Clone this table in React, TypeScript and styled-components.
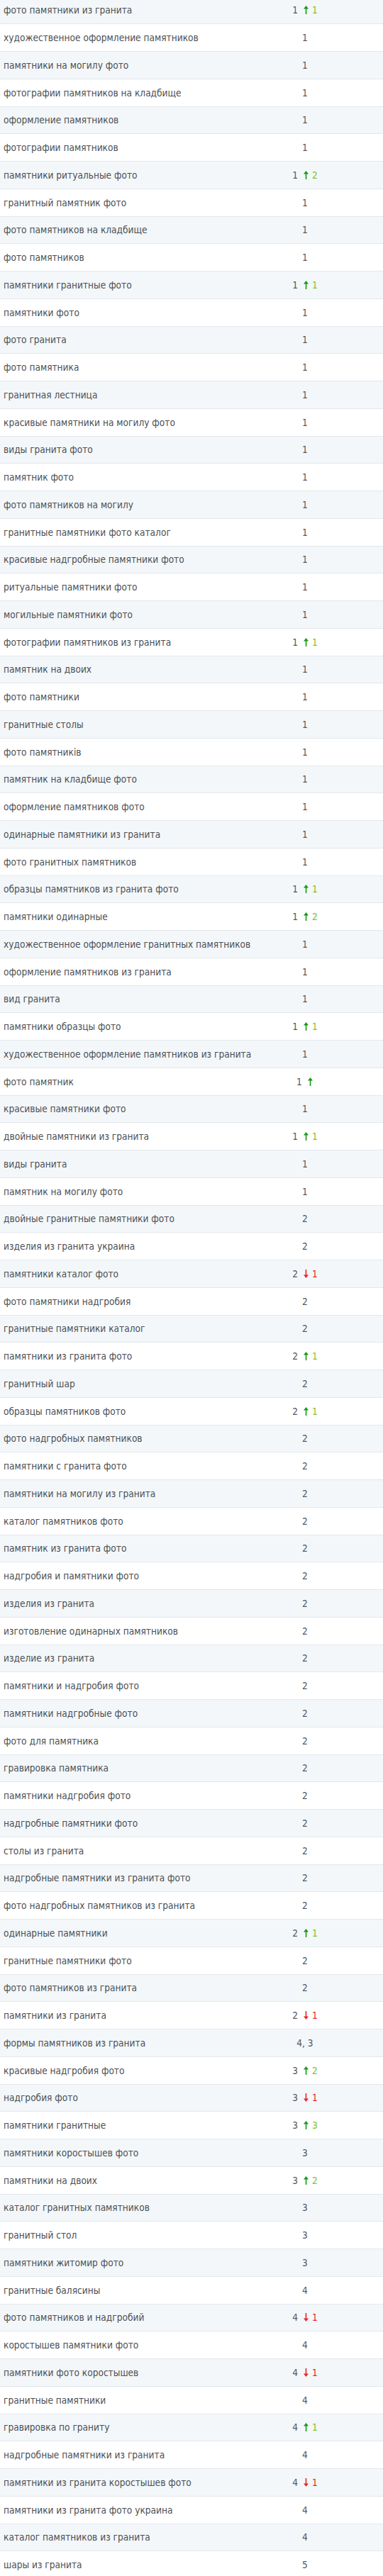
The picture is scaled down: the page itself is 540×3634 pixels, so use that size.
import React from "react";
import styled, { createGlobalStyle } from "styled-components";

type Move = "up" | "down";

type Query = {
  phrase: string;
  pos: string;
  move?: Move;
  delta?: number;
};

const rows: Query[] = [
  { phrase: "фото памятники из гранита", pos: "1", move: "up", delta: 1 },
  { phrase: "художественное оформление памятников", pos: "1" },
  { phrase: "памятники на могилу фото", pos: "1" },
  { phrase: "фотографии памятников на кладбище", pos: "1" },
  { phrase: "оформление памятников", pos: "1" },
  { phrase: "фотографии памятников", pos: "1" },
  { phrase: "памятники ритуальные фото", pos: "1", move: "up", delta: 2 },
  { phrase: "гранитный памятник фото", pos: "1" },
  { phrase: "фото памятников на кладбище", pos: "1" },
  { phrase: "фото памятников", pos: "1" },
  { phrase: "памятники гранитные фото", pos: "1", move: "up", delta: 1 },
  { phrase: "памятники фото", pos: "1" },
  { phrase: "фото гранита", pos: "1" },
  { phrase: "фото памятника", pos: "1" },
  { phrase: "гранитная лестница", pos: "1" },
  { phrase: "красивые памятники на могилу фото", pos: "1" },
  { phrase: "виды гранита фото", pos: "1" },
  { phrase: "памятник фото", pos: "1" },
  { phrase: "фото памятников на могилу", pos: "1" },
  { phrase: "гранитные памятники фото каталог", pos: "1" },
  { phrase: "красивые надгробные памятники фото", pos: "1" },
  { phrase: "ритуальные памятники фото", pos: "1" },
  { phrase: "могильные памятники фото", pos: "1" },
  { phrase: "фотографии памятников из гранита", pos: "1", move: "up", delta: 1 },
  { phrase: "памятник на двоих", pos: "1" },
  { phrase: "фото памятники", pos: "1" },
  { phrase: "гранитные столы", pos: "1" },
  { phrase: "фото памятників", pos: "1" },
  { phrase: "памятник на кладбище фото", pos: "1" },
  { phrase: "оформление памятников фото", pos: "1" },
  { phrase: "одинарные памятники из гранита", pos: "1" },
  { phrase: "фото гранитных памятников", pos: "1" },
  { phrase: "образцы памятников из гранита фото", pos: "1", move: "up", delta: 1 },
  { phrase: "памятники одинарные", pos: "1", move: "up", delta: 2 },
  { phrase: "художественное оформление гранитных памятников", pos: "1" },
  { phrase: "оформление памятников из гранита", pos: "1" },
  { phrase: "вид гранита", pos: "1" },
  { phrase: "памятники образцы фото", pos: "1", move: "up", delta: 1 },
  { phrase: "художественное оформление памятников из гранита", pos: "1" },
  { phrase: "фото памятник", pos: "1", move: "up" },
  { phrase: "красивые памятники фото", pos: "1" },
  { phrase: "двойные памятники из гранита", pos: "1", move: "up", delta: 1 },
  { phrase: "виды гранита", pos: "1" },
  { phrase: "памятник на могилу фото", pos: "1" },
  { phrase: "двойные гранитные памятники фото", pos: "2" },
  { phrase: "изделия из гранита украина", pos: "2" },
  { phrase: "памятники каталог фото", pos: "2", move: "down", delta: 1 },
  { phrase: "фото памятники надгробия", pos: "2" },
  { phrase: "гранитные памятники каталог", pos: "2" },
  { phrase: "памятники из гранита фото", pos: "2", move: "up", delta: 1 },
  { phrase: "гранитный шар", pos: "2" },
  { phrase: "образцы памятников фото", pos: "2", move: "up", delta: 1 },
  { phrase: "фото надгробных памятников", pos: "2" },
  { phrase: "памятники с гранита фото", pos: "2" },
  { phrase: "памятники на могилу из гранита", pos: "2" },
  { phrase: "каталог памятников фото", pos: "2" },
  { phrase: "памятник из гранита фото", pos: "2" },
  { phrase: "надгробия и памятники фото", pos: "2" },
  { phrase: "изделия из гранита", pos: "2" },
  { phrase: "изготовление одинарных памятников", pos: "2" },
  { phrase: "изделие из гранита", pos: "2" },
  { phrase: "памятники и надгробия фото", pos: "2" },
  { phrase: "памятники надгробные фото", pos: "2" },
  { phrase: "фото для памятника", pos: "2" },
  { phrase: "гравировка памятника", pos: "2" },
  { phrase: "памятники надгробия фото", pos: "2" },
  { phrase: "надгробные памятники фото", pos: "2" },
  { phrase: "столы из гранита", pos: "2" },
  { phrase: "надгробные памятники из гранита фото", pos: "2" },
  { phrase: "фото надгробных памятников из гранита", pos: "2" },
  { phrase: "одинарные памятники", pos: "2", move: "up", delta: 1 },
  { phrase: "гранитные памятники фото", pos: "2" },
  { phrase: "фото памятников из гранита", pos: "2" },
  { phrase: "памятники из гранита", pos: "2", move: "down", delta: 1 },
  { phrase: "формы памятников из гранита", pos: "4, 3" },
  { phrase: "красивые надгробия фото", pos: "3", move: "up", delta: 2 },
  { phrase: "надгробия фото", pos: "3", move: "down", delta: 1 },
  { phrase: "памятники гранитные", pos: "3", move: "up", delta: 3 },
  { phrase: "памятники коростышев фото", pos: "3" },
  { phrase: "памятники на двоих", pos: "3", move: "up", delta: 2 },
  { phrase: "каталог гранитных памятников", pos: "3" },
  { phrase: "гранитный стол", pos: "3" },
  { phrase: "памятники житомир фото", pos: "3" },
  { phrase: "гранитные балясины", pos: "4" },
  { phrase: "фото памятников и надгробий", pos: "4", move: "down", delta: 1 },
  { phrase: "коростышев памятники фото", pos: "4" },
  { phrase: "памятники фото коростышев", pos: "4", move: "down", delta: 1 },
  { phrase: "гранитные памятники", pos: "4" },
  { phrase: "гравировка по граниту", pos: "4", move: "up", delta: 1 },
  { phrase: "надгробные памятники из гранита", pos: "4" },
  { phrase: "памятники из гранита коростышев фото", pos: "4", move: "down", delta: 1 },
  { phrase: "памятники из гранита фото украина", pos: "4" },
  { phrase: "каталог памятников из гранита", pos: "4" },
  { phrase: "шары из гранита", pos: "5" },
];

const GlobalStyle = createGlobalStyle`
  html, body {
    margin: 0;
    padding: 0;
    background: #ffffff;
  }
  body {
    font-family: "DejaVu Sans Condensed", "DejaVu Sans", Tahoma, sans-serif;
    -webkit-font-smoothing: antialiased;
  }
`;

const Page = styled.div`
  width: 540px;
  height: 3634px;
  overflow: hidden;
`;

// the capture starts a few pixels into the first row
const Table = styled.div`
  margin-top: -4.4px;
  display: flex;
  flex-direction: column;
`;

const Row = styled.div<{ $shaded: boolean }>`
  display: flex;
  align-items: center;
  height: 38.75px;
  box-sizing: border-box;
  background: ${(p) => (p.$shaded ? "#f3f7fa" : "#ffffff")};
  border-bottom: 1px solid #e3e8ec;
`;

const Phrase = styled.div`
  flex: 1 1 auto;
  min-width: 0;
  padding-left: 5px;
  font-size: 13.6px;
  color: #4b4f54;
  white-space: nowrap;
`;

const PosCell = styled.div`
  flex: 0 0 100px;
  display: flex;
  justify-content: center;
  align-items: center;
  margin-right: 60px;
  font-size: 13.6px;
  color: #53585e;
`;

const Arrow = styled.svg<{ $move: Move }>`
  display: block;
  width: 9px;
  height: 12px;
  margin-left: 7px;
  color: ${(p) => (p.$move === "up" ? "#169a16" : "#e8262a")};
`;

const Delta = styled.span<{ $move: Move }>`
  margin-left: 4px;
  color: ${(p) => (p.$move === "up" ? "#86c11c" : "#f01e24")};
`;

function MoveArrow({ move }: { move: Move }) {
  return (
    <Arrow $move={move} viewBox="0 0 9 12" aria-hidden>
      <g transform={move === "down" ? "rotate(180 4.5 6)" : undefined}>
        <rect x="3.75" y="3" width="1.6" height="9" fill="currentColor" />
        <path d="M4.5 0 L8 4.4 L1 4.4 Z" fill="currentColor" />
      </g>
    </Arrow>
  );
}

export default function App() {
  return (
    <Page>
      <GlobalStyle />
      <Table>
        {rows.map((r, i) => (
          <Row key={i} $shaded={i % 2 === 0}>
            <Phrase>{r.phrase}</Phrase>
            <PosCell>
              <span>{r.pos}</span>
              {r.move && <MoveArrow move={r.move} />}
              {r.move && r.delta !== undefined && (
                <Delta $move={r.move}>{r.delta}</Delta>
              )}
            </PosCell>
          </Row>
        ))}
      </Table>
    </Page>
  );
}
